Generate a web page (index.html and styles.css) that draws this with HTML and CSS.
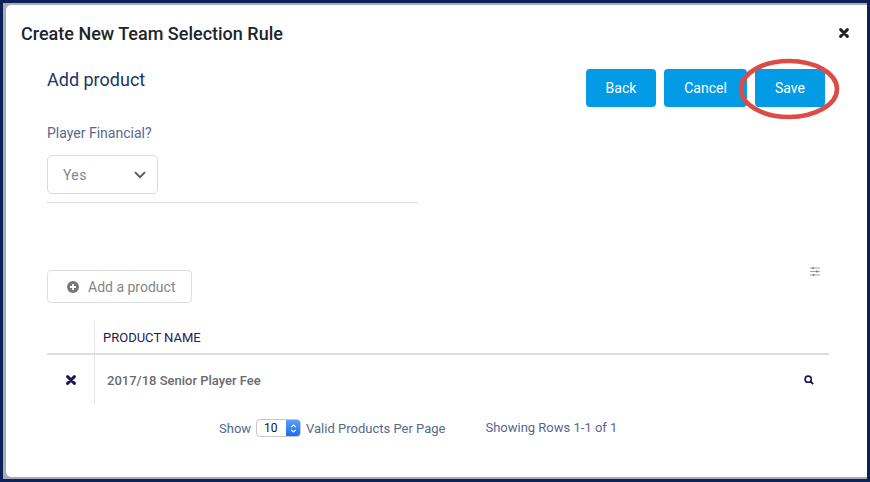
FILE: index.html
```html
<!DOCTYPE html>
<html lang="en">
<head>
<meta charset="utf-8">
<title>Create New Team Selection Rule</title>
<link rel="stylesheet" href="styles.css">
</head>
<body>
<div class="backdrop">
  <div class="modal">
    <header class="modal-head">
      <h1 class="modal-title">Create New Team Selection Rule</h1>
      <svg class="close" viewBox="0 0 10 10" width="10" height="10"><path d="M1.6 1.6 8.4 8.4M8.4 1.6 1.6 8.4" stroke="#222" stroke-width="2.9" stroke-linecap="round"/></svg>
    </header>
    <div class="modal-body">
      <div class="top">
        <div class="form">
          <h2 class="sub">Add product</h2>
          <label class="field-label">Player Financial?</label>
          <div class="select">
            <span>Yes</span>
            <svg viewBox="0 0 12 8" width="12" height="8"><path d="M1 1.2 6 6.2 11 1.2" fill="none" stroke="#555" stroke-width="1.8"/></svg>
          </div>
          <div class="rule"></div>
        </div>
        <div class="actions">
          <button class="btn btn-back">Back</button>
          <button class="btn btn-cancel">Cancel</button>
          <button class="btn btn-save">Save</button>
          <svg class="circle" viewBox="0 0 102 62" width="102" height="62"><ellipse cx="51" cy="31" rx="48" ry="28" fill="none" stroke="#dc4b45" stroke-width="4.6"/></svg>
        </div>
      </div>
      <div class="toolbar">
        <div class="add">
          <svg viewBox="0 0 12 12" width="12" height="12"><circle cx="6" cy="6" r="6" fill="#77777c"/><path d="M6 3v6M3 6h6" stroke="#fff" stroke-width="1.8"/></svg>
          <span>Add a product</span>
        </div>
        <svg class="sliders" viewBox="0 0 10 9" width="10" height="9"><path d="M0 1h10M0 4.5h10M0 8h10" stroke="#9a9a9e" stroke-width=".9"/><path d="M3 0v2M6.8 3.5v2M3.5 7v2" stroke="#77777c" stroke-width="1.4"/></svg>
      </div>
      <div class="table">
        <div class="thead">
          <div class="cell-a"></div>
          <div class="cell-h">PRODUCT NAME</div>
        </div>
        <div class="trow">
          <div class="cell-a"><svg viewBox="0 0 10 10" width="10" height="10"><path d="M1.6 1.6 8.4 8.4M8.4 1.6 1.6 8.4" stroke="#15184f" stroke-width="2.9" stroke-linecap="round"/></svg></div>
          <div class="cell-d">
            <span>2017/18 Senior Player Fee</span>
            <svg viewBox="0 0 10 10" width="10" height="10"><circle cx="4.2" cy="4.2" r="3.1" fill="none" stroke="#15184f" stroke-width="1.6"/><path d="M6.5 6.5 9.2 9.2" stroke="#15184f" stroke-width="1.8"/></svg>
          </div>
        </div>
      </div>
      <div class="pager">
        <div class="per-page">
          <span>Show</span>
          <div class="stepper">
            <span class="stepper-val">10</span>
            <span class="stepper-arrows"><svg viewBox="0 0 8 12" width="7" height="11"><path d="M1.4 4.5 4 2l2.6 2.5M1.4 7.5 4 10l2.6-2.5" fill="none" stroke="#fff" stroke-width="1.2"/></svg></span>
          </div>
          <span>Valid Products Per Page</span>
        </div>
        <div class="rows">Showing Rows 1-1 of 1</div>
      </div>
    </div>
  </div>
</div>
</body>
</html>
```
FILE: styles.css
```css
* { box-sizing: border-box; }
html, body { margin: 0; height: 100%; }
body {
  width: 870px;
  height: 482px;
  padding: 3px;
  background: #0b2259;
  font-family: Roboto, "Liberation Sans", sans-serif;
  overflow: hidden;
}
.backdrop {
  height: 476px;
  padding: 2px 0 2px 3px;
  background: #a9acb8;
}
.modal {
  height: 472px;
  background: #fff;
  border-radius: 5px 0 0 5px;
}
.modal-head {
  display: flex;
  align-items: center;
  justify-content: space-between;
  padding: 18px 18px 0 15px;
  height: 40px;
}
.modal-title {
  margin: 0;
  font-size: 18px;
  line-height: 20px;
  font-weight: 500;
  color: #212529;
}
.close { display: block; margin-top: -3px; }
.modal-body { padding: 0 38px 0 41px; }
.top {
  display: flex;
  justify-content: space-between;
  height: 222px;
}
.form { width: 371px; padding-top: 24px; }
.sub {
  margin: 0;
  font-size: 18px;
  line-height: 22px;
  font-weight: 400;
  color: #1c3565;
}
.field-label {
  display: block;
  margin-top: 34px;
  font-size: 14px;
  line-height: 16px;
  color: #56688f;
}
.select {
  display: flex;
  align-items: center;
  justify-content: space-between;
  width: 111px;
  height: 39px;
  margin-top: 14px;
  padding: 0 11px 0 15px;
  border: 1px solid #d9dbdf;
  border-radius: 5px;
  font-size: 14px;
  letter-spacing: .4px;
  color: #85858a;
}
.rule { margin-top: 8px; height: 1px; background: #d6dbe6; }
.actions {
  position: relative;
  display: flex;
  gap: 8px;
  padding-top: 24px;
  margin-right: 4px;
  height: 62px;
}
.btn {
  height: 38px;
  border: 0;
  border-radius: 4px;
  background: #039be5;
  color: #fff;
  font-family: inherit;
  font-size: 14px;
  padding: 0;
}
.btn-back, .btn-save { width: 70px; }
.btn-cancel { width: 83px; }
.circle {
  position: absolute;
  left: 152px;
  top: 13px;
}
.toolbar {
  display: flex;
  align-items: flex-start;
  justify-content: space-between;
  height: 54px;
  padding-right: 9px;
}
.add {
  display: flex;
  align-items: center;
  gap: 9px;
  width: 145px;
  height: 33px;
  margin-top: 3px;
  padding-left: 19px;
  border: 1px solid #dedfe3;
  border-radius: 4px;
  font-size: 14px;
  color: #85858a;
}
.sliders { display: block; }
.thead, .trow { display: flex; }
.cell-a {
  display: flex;
  align-items: center;
  justify-content: center;
  width: 48px;
  border-right: 1px solid #e6e6e8;
}
.thead {
  height: 34px;
  border-bottom: 2px solid #dddddf;
}
.cell-h {
  padding-left: 8px;
  line-height: 33px;
  font-size: 13px;
  color: #1a2158;
}
.trow { height: 49px; }
.cell-d {
  flex: 1;
  display: flex;
  align-items: center;
  justify-content: space-between;
  padding: 1px 15px 0 12px;
  font-size: 13px;
  font-weight: 500;
  color: #6a6a70;
}
.pager {
  display: flex;
  gap: 40px;
  padding-left: 172px;
  margin-top: 15px;
  font-size: 13px;
  color: #56688f;
}
.per-page { display: flex; align-items: center; gap: 5px; }
.stepper {
  display: flex;
  width: 45px;
  height: 18px;
  border: 1px solid #c8c8cb;
  border-radius: 4px;
  overflow: hidden;
  background: #fff;
}
.stepper-val {
  flex: 1;
  padding-left: 7px;
  font-size: 12px;
  line-height: 17px;
  color: #111;
}
.stepper-arrows {
  display: flex;
  align-items: center;
  justify-content: center;
  width: 15px;
  margin: -1px -1px -1px 0;
  background: linear-gradient(#5ba1f5, #1a6cf0);
}
.rows { line-height: 16px; margin-top: 1px; }
```
